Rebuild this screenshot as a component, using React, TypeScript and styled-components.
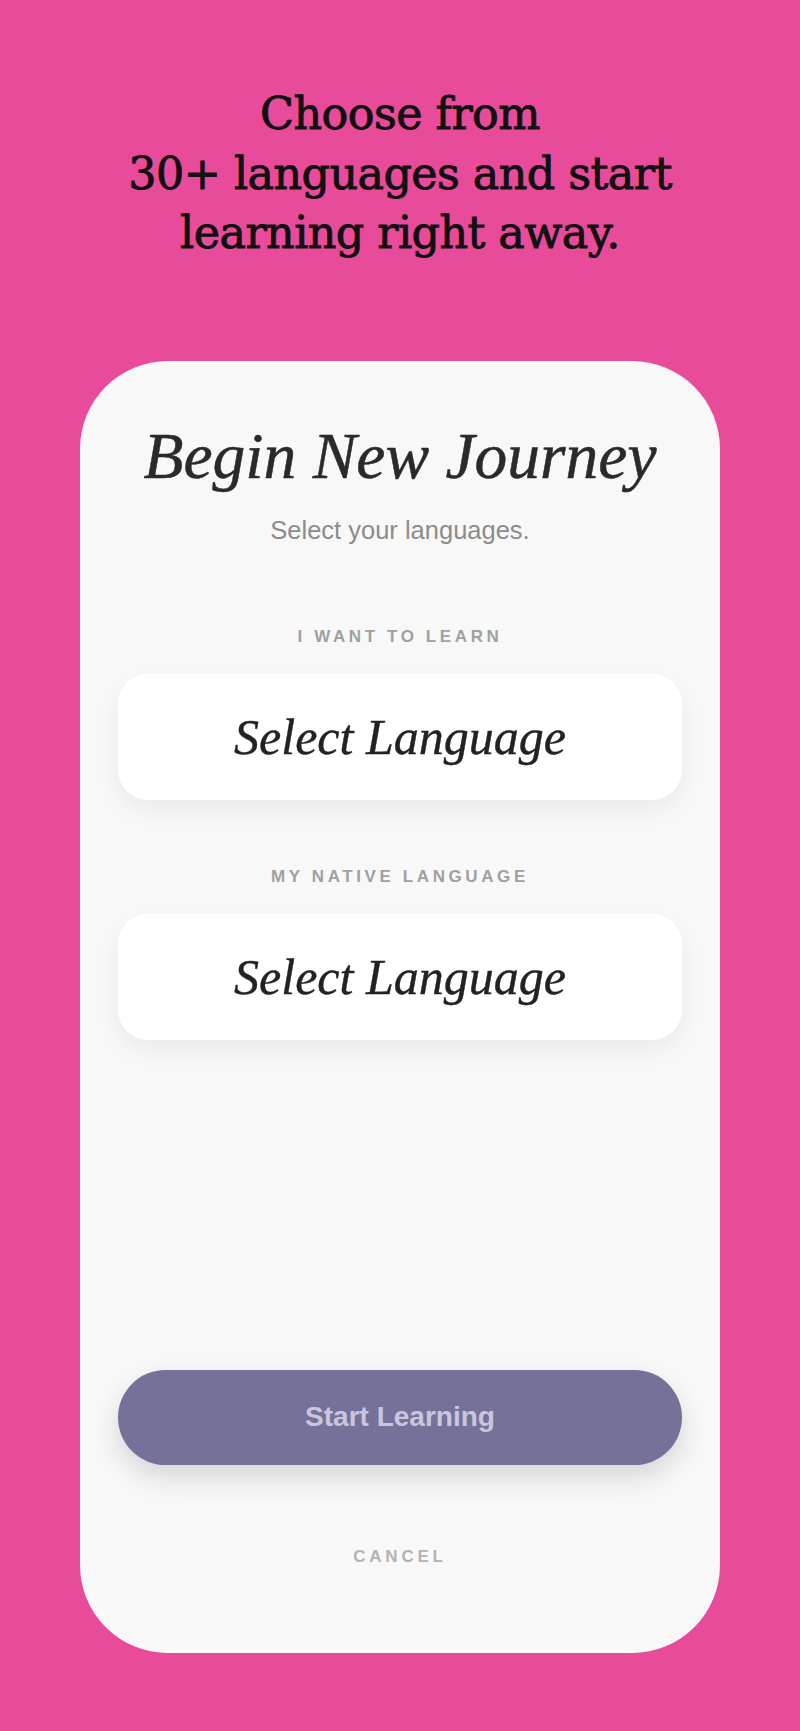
import styled, { createGlobalStyle } from 'styled-components'

const GlobalStyle = createGlobalStyle`
  html, body {
    margin: 0;
    padding: 0;
    background: #e94b9b;
  }
  * {
    box-sizing: border-box;
  }
`

const Page = styled.div`
  min-height: 1731px;
  background: #e94b9b;
  padding-top: 84px;
  display: flex;
  flex-direction: column;
  align-items: center;
`

const Headline = styled.h1`
  margin: 0;
  font-family: 'DejaVu Serif', 'Liberation Serif', serif;
  font-weight: 400;
  font-size: 44.5px;
  line-height: 59.5px;
  letter-spacing: -0.6px;
  color: #111;
  -webkit-text-stroke: 0.9px #111;
  text-align: center;
`

const Card = styled.div`
  width: 640px;
  height: 1292px;
  margin-top: 98px;
  background: #f8f8f8;
  border-radius: 88px;
  padding: 55px 38px 86px;
  display: flex;
  flex-direction: column;
  align-items: stretch;
`

const Title = styled.h2`
  margin: 0;
  font-family: 'Liberation Serif', serif;
  font-style: italic;
  font-weight: 400;
  font-size: 65.5px;
  line-height: 80px;
  color: #2a2a2a;
  -webkit-text-stroke: 0.5px #2a2a2a;
  text-align: center;
`

const Subtitle = styled.p`
  margin: 19px 0 0;
  font-family: 'Liberation Sans', Arial, sans-serif;
  font-size: 25.5px;
  line-height: 30px;
  color: #8c8c8c;
  text-align: center;
`

const Label = styled.div<{ $gap: number }>`
  margin-top: ${p => p.$gap}px;
  font-family: 'Liberation Sans', Arial, sans-serif;
  font-weight: 700;
  font-size: 17px;
  line-height: 20px;
  letter-spacing: 3.6px;
  color: #a0a0a0;
  text-align: center;
  text-transform: uppercase;
`

const Picker = styled.button`
  margin-top: 27px;
  height: 126px;
  border: none;
  border-radius: 30px;
  background: #fff;
  box-shadow: 0 10px 26px rgba(0, 0, 0, 0.06);
  display: flex;
  align-items: center;
  justify-content: center;
  font-family: 'Liberation Serif', serif;
  font-style: italic;
  font-size: 50px;
  color: #222;
  -webkit-text-stroke: 0.4px #222;
  cursor: pointer;
`

const StartButton = styled.button`
  margin-top: auto;
  height: 95px;
  border: none;
  border-radius: 48px;
  background: #75729a;
  box-shadow: 0 12px 28px rgba(0, 0, 0, 0.14);
  font-family: 'Liberation Sans', Arial, sans-serif;
  font-weight: 700;
  font-size: 28px;
  color: #c9c6de;
  cursor: pointer;
`

const Cancel = styled.button`
  margin-top: 82px;
  border: none;
  background: none;
  padding: 0;
  font-family: 'Liberation Sans', Arial, sans-serif;
  font-weight: 700;
  font-size: 17px;
  line-height: 20px;
  letter-spacing: 3.8px;
  color: #b3b3b3;
  text-align: center;
  cursor: pointer;
`

export default function App() {
  return (
    <>
      <GlobalStyle />
      <Page>
        <Headline>
          Choose from
          <br />
          30+ languages and start
          <br />
          learning right away.
        </Headline>
        <Card>
          <Title>Begin New Journey</Title>
          <Subtitle>Select your languages.</Subtitle>
          <Label $gap={82}>I want to learn</Label>
          <Picker>Select Language</Picker>
          <Label $gap={67}>My native language</Label>
          <Picker>Select Language</Picker>
          <StartButton>Start Learning</StartButton>
          <Cancel>CANCEL</Cancel>
        </Card>
      </Page>
    </>
  )
}
